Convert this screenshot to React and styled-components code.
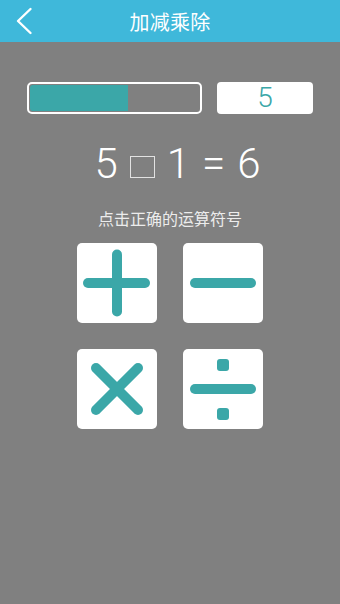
import React from 'react';
import styled, { createGlobalStyle } from 'styled-components';

const GlobalStyle = createGlobalStyle`
  html, body {
    margin: 0;
    padding: 0;
    background: #808080;
  }
  body {
    font-family: Roboto, "Liberation Sans", "Noto Sans CJK SC", sans-serif;
  }
`;

const TEAL = '#3ba7a8';

const Page = styled.div`
  width: 340px;
  min-height: 604px;
  background: #808080;
  display: flex;
  flex-direction: column;
`;

const Header = styled.header`
  height: 42px;
  background: #3fb8da;
  display: flex;
  align-items: center;
  justify-content: center;
  position: relative;
`;

const BackButton = styled.button`
  position: absolute;
  left: 15px;
  top: 7px;
  width: 18px;
  height: 28px;
  padding: 0;
  border: none;
  background: transparent;
  display: flex;
  align-items: center;
  justify-content: center;
`;

const Title = styled.h1`
  margin: 0;
  font-size: 20px;
  font-weight: 400;
  color: #ffffff;
  font-family: "Noto Sans CJK SC", sans-serif;
  letter-spacing: 0.3px;
`;

const Content = styled.main`
  display: flex;
  flex-direction: column;
  align-items: center;
  padding-top: 40px;
`;

const StatusRow = styled.div`
  width: 286px;
  display: flex;
  justify-content: space-between;
`;

const Progress = styled.div`
  width: 175px;
  height: 32px;
  box-sizing: border-box;
  border: 2px solid #ffffff;
  border-radius: 5px;
  padding: 1px;
  display: flex;
`;

const ProgressFill = styled.div`
  height: 100%;
  background: ${TEAL};
  border-radius: 3px 0 0 3px;
`;

const Score = styled.div`
  width: 96px;
  height: 32px;
  background: #ffffff;
  border-radius: 4px;
  display: flex;
  align-items: center;
  justify-content: center;
  color: ${TEAL};
  font-family: Roboto, "Liberation Sans", sans-serif;
  font-weight: 300;
  font-size: 28px;
  line-height: 1;
`;

const Equation = styled.div`
  margin-top: 28px;
  margin-left: 15px;
  color: #ffffff;
  font-family: Roboto, "Liberation Sans", sans-serif;
  font-weight: 300;
  font-size: 42px;
  line-height: 44px;
  height: 44px;
  display: flex;
  align-items: flex-start;
  gap: 12px;
`;

const Blank = styled.span`
  flex: none;
  align-self: flex-end;
  width: 25px;
  height: 22px;
  border: 1.5px solid #e2e2e2;
  box-sizing: border-box;
  margin-bottom: 8px;
`;

const Hint = styled.p`
  margin: 22px 0 0;
  color: #ececec;
  font-family: "Noto Sans CJK SC", sans-serif;
  font-size: 16px;
  line-height: 20px;
`;

const Pad = styled.div`
  margin-top: 15px;
  display: grid;
  grid-template-columns: repeat(2, 80px);
  gap: 26px;
`;

const OpButton = styled.button`
  width: 80px;
  height: 80px;
  padding: 0;
  border: none;
  border-radius: 5px;
  background: #ffffff;
  display: flex;
  align-items: center;
  justify-content: center;
  cursor: pointer;
`;

const icons = {
  plus: (
    <g stroke={TEAL} strokeWidth="10" strokeLinecap="round">
      <line x1="40" y1="11.5" x2="40" y2="68.5" />
      <line x1="11" y1="40" x2="68" y2="40" />
    </g>
  ),
  minus: (
    <g stroke={TEAL} strokeWidth="10" strokeLinecap="round">
      <line x1="12" y1="40" x2="68" y2="40" />
    </g>
  ),
  times: (
    <g stroke={TEAL} strokeWidth="10" strokeLinecap="round">
      <line x1="19" y1="19" x2="61" y2="61" />
      <line x1="61" y1="19" x2="19" y2="61" />
    </g>
  ),
  divide: (
    <g fill={TEAL}>
      <rect x="7" y="35" width="66" height="10" rx="5" />
      <rect x="34" y="10" width="12" height="12" rx="3" />
      <rect x="34" y="59" width="12" height="12" rx="3" />
    </g>
  ),
};

const ops = ['plus', 'minus', 'times', 'divide'];

export default function App() {
  const progress = 0.58;
  return (
    <>
      <GlobalStyle />
      <Page>
        <Header>
          <BackButton aria-label="back">
            <svg width="18" height="28" viewBox="0 0 18 28">
              <polyline points="15.5,2 3,14 15.5,26" fill="none" stroke="#fff" strokeWidth="2.4" strokeLinecap="round" strokeLinejoin="round" />
            </svg>
          </BackButton>
          <Title>加减乘除</Title>
        </Header>
        <Content>
          <StatusRow>
            <Progress>
              <ProgressFill style={{ width: `${progress * 100}%` }} />
            </Progress>
            <Score>5</Score>
          </StatusRow>
          <Equation>
            <span>5</span>
            <Blank />
            <span>1</span>
            <span>=</span>
            <span>6</span>
          </Equation>
          <Hint>点击正确的运算符号</Hint>
          <Pad>
            {ops.map((op) => (
              <OpButton key={op} aria-label={op}>
                <svg width="80" height="80" viewBox="0 0 80 80">{icons[op]}</svg>
              </OpButton>
            ))}
          </Pad>
        </Content>
      </Page>
    </>
  );
}
